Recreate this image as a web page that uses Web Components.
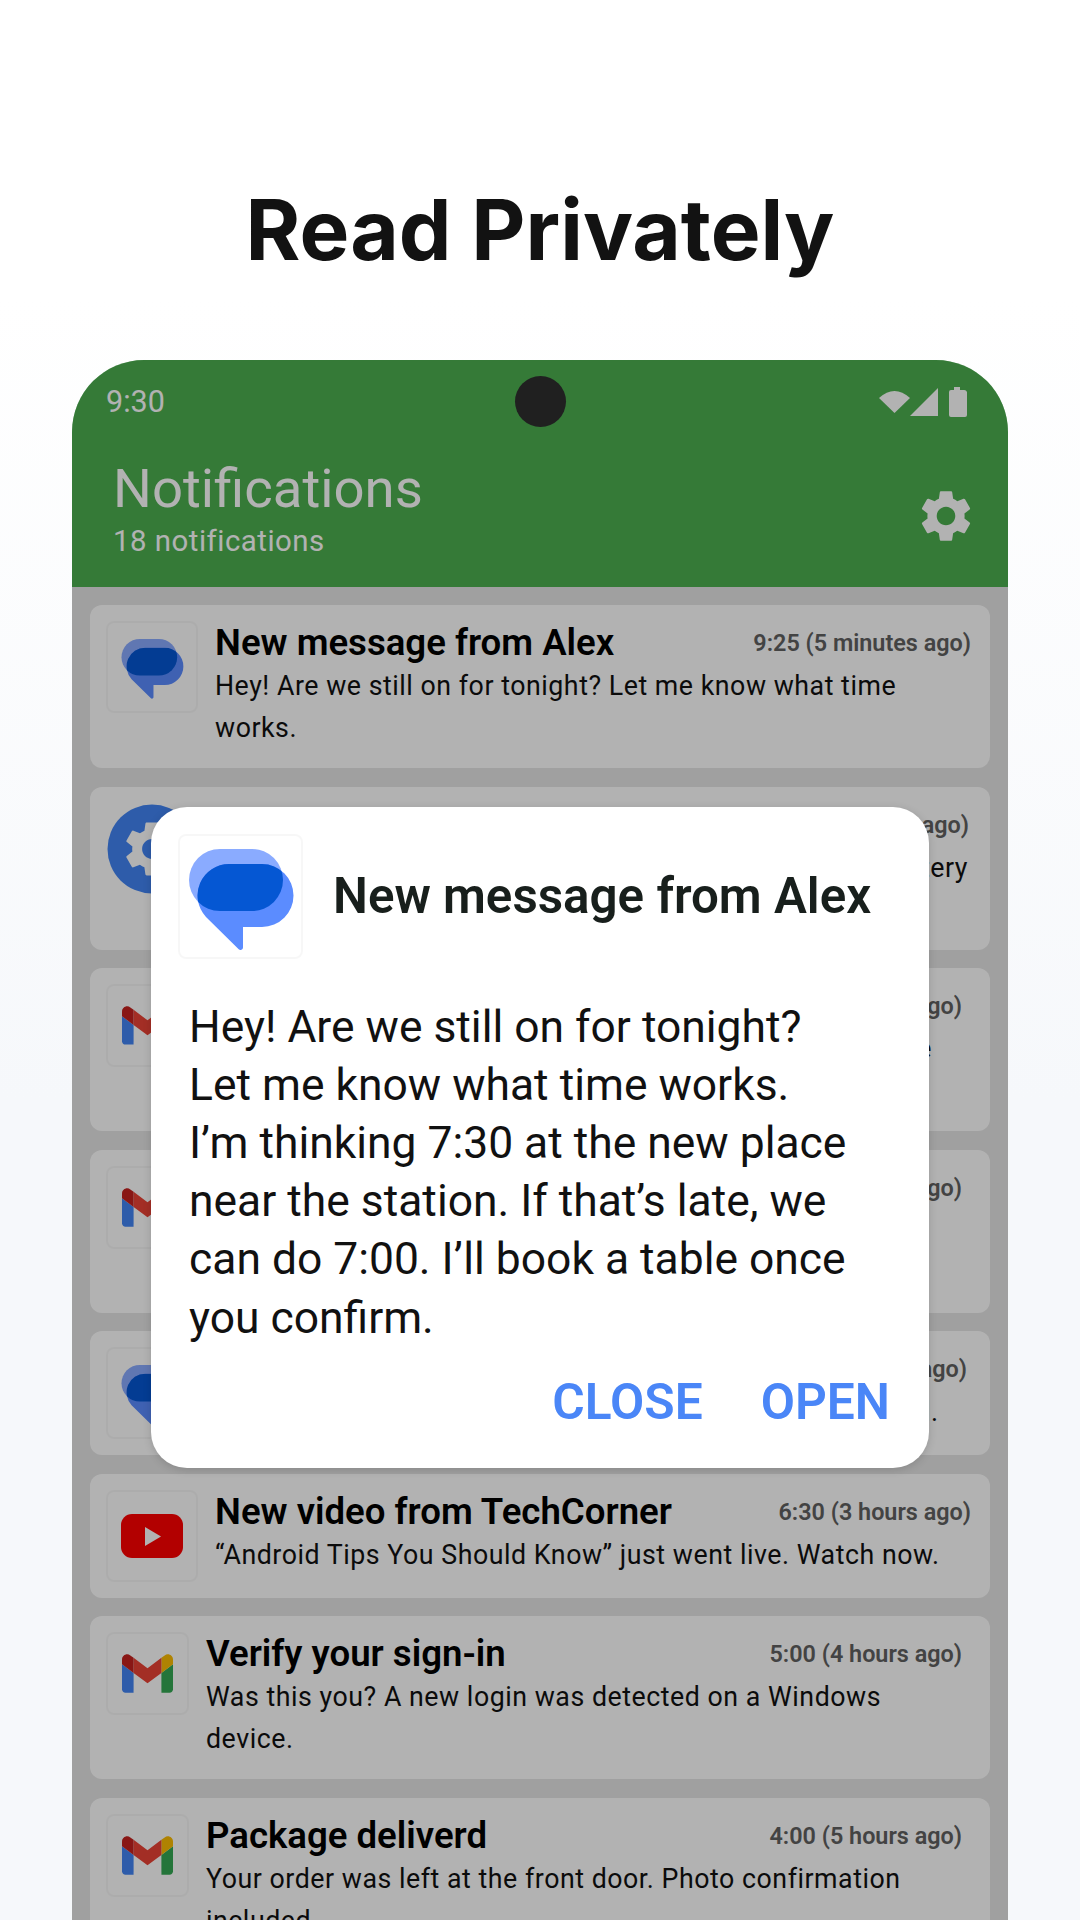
<!DOCTYPE html>
<html lang="en">
<head>
<meta charset="utf-8">
<title>Read Privately</title>
<style>
  html, body { margin: 0; padding: 0; }
  body { font-family: Roboto, "Liberation Sans", sans-serif; }
</style>
</head>
<body>
<store-screen>
  <span slot="headline">Read Privately</span>

  <notif-card icon="messages" box="92" heading="New message from Alex" time="9:25 (5 minutes ago)">Hey! Are we still on for tonight? Let me know what time works.</notif-card>
  <notif-card icon="settings" box="90" heading="Battery running low" time="8:45 (45 minutes ago)">Your phone is at 15%. Turn on Battery Saver to extend battery use for the rest of today.</notif-card>
  <notif-card icon="gmail" box="83" heading="Your receipt is ready" time="8:10 (1 hour ago)">Thanks for your purchases! Your receipt is attached for the latest order from the store today.</notif-card>
  <notif-card icon="gmail" box="83" heading="Meeting moved to Friday" time="7:40 (2 hours ago)">The team sync now starts at 10:00 and the room has changed. Please update your calendar.</notif-card>
  <notif-card icon="messages" box="92" gap="13" heading="New message from Mom" time="7:05 (2 hours ago)">Call me when you get the chance, it is nothing urgent at all.</notif-card>
  <notif-card icon="youtube" box="92" heading="New video from TechCorner" time="6:30 (3 hours ago)">“Android Tips You Should Know” just went live. Watch now.</notif-card>
  <notif-card icon="gmail" box="83" heading="Verify your sign-in" time="5:00 (4 hours ago)">Was this you? A new login was detected on a Windows device.</notif-card>
  <notif-card icon="gmail" box="83" heading="Package deliverd" time="4:00 (5 hours ago)">Your order was left at the front door. Photo confirmation included.</notif-card>

  <alert-dialog slot="dialog" heading="New message from Alex">
    Hey! Are we still on for tonight?<br>
    Let me know what time works.<br>
    I’m thinking 7:30 at the new place near the station. If that’s late, we can do 7:00. I’ll book a table once you confirm.
  </alert-dialog>
</store-screen>

<script>
const GEAR = "M19.14 12.94c.04-.3.06-.61.06-.94 0-.32-.02-.64-.07-.94l2.03-1.58c.18-.14.23-.41.12-.61l-1.92-3.32c-.12-.22-.37-.29-.59-.22l-2.39.96c-.5-.38-1.03-.7-1.62-.94l-.36-2.54c-.04-.24-.24-.41-.48-.41h-3.84c-.24 0-.43.17-.47.41l-.36 2.54c-.59.24-1.13.57-1.62.94l-2.39-.96c-.22-.08-.47 0-.59.22L2.74 8.87c-.12.21-.08.47.12.61l2.03 1.58c-.05.3-.09.63-.09.94s.02.64.07.94l-2.03 1.58c-.18.14-.23.41-.12.61l1.92 3.32c.12.22.37.29.59.22l2.39-.96c.5.38 1.03.7 1.62.94l.36 2.54c.05.24.24.41.48.41h3.84c.24 0 .44-.17.47-.41l.36-2.54c.59-.24 1.13-.56 1.62-.94l2.39.96c.22.08.47 0 .59-.22l1.92-3.32c.12-.22.07-.47-.12-.61l-2.01-1.58zM12 15.6c-1.98 0-3.6-1.62-3.6-3.6s1.62-3.6 3.6-3.6 3.6 1.62 3.6 3.6-1.62 3.6-3.6 3.6z";

const BUBBLE = "M51 30H84A31.5 31.5 0 0 1 84 93H65V113.5a2.5 2.5 0 0 1-4.3 1.7L28 83A31.5 31.5 0 0 1 51 30z";

let clipCount = 0;
const ICONS = {
  messages(size) {
    const id = "bubble" + clipCount++;
    return `<svg width="${size}" height="${size}" viewBox="0 0 125 125">
      <clipPath id="${id}"><path d="${BUBBLE}"/></clipPath>
      <rect x="11" y="15" width="94" height="62" rx="31" fill="#8aabff"/>
      <path d="${BUBBLE}" fill="#5b8cff"/>
      <rect x="11" y="15" width="94" height="62" rx="31" fill="#0557d3" clip-path="url(#${id})"/>
    </svg>`;
  },
  gmail() {
    return `<svg width="51" height="39" viewBox="52 42 88 66">
      <path fill="#4285f4" d="M58 108h14V74L52 59v43c0 3.32 2.69 6 6 6"/>
      <path fill="#34a853" d="M120 108h14c3.32 0 6-2.69 6-6V59l-20 15"/>
      <path fill="#fbbc04" d="M120 48v26l20-15v-8c0-7.42-8.47-11.65-14.4-7.2"/>
      <path fill="#ea4335" d="M72 74V48l24 18 24-18v26L96 92"/>
      <path fill="#c5221f" d="M52 51v8l20 15V48l-5.6-4.2c-5.94-4.45-14.4-.22-14.4 7.2"/>
    </svg>`;
  },
  youtube() {
    return `<svg width="62" height="44" viewBox="0 0 62 44">
      <rect width="62" height="44" rx="11" fill="#f00"/>
      <path d="M24 13V32L40 22.500z" fill="#fff"/>
    </svg>`;
  },
  settings() {
    return `<svg width="90" height="90" viewBox="0 0 90 90">
      <circle cx="46" cy="45" r="44.500" fill="#4285f4"/>
      <g transform="translate(13 12) scale(2.750)"><path d="${GEAR}" fill="#fff"/></g>
    </svg>`;
  },
};

class AppIcon extends HTMLElement {
  constructor() {
    super();
    this.attachShadow({ mode: "open" });
  }
  connectedCallback() {
    const box = this.getAttribute("box") ?? "92";
    const svg = this.getAttribute("svg") ?? "74";
    const name = this.getAttribute("name");
    this.shadowRoot.innerHTML = `
      <style>
        :host { display: flex; flex: none; align-items: center; justify-content: center;
          box-sizing: border-box; width: ${box}px; height: ${box}px;
          border: 2px solid rgba(0,0,0,.03); border-radius: 8px; }
        :host([name="settings"]) { border: 0; height: 92px; }
        svg { display: block; flex: none; }
      </style>
      ${ICONS[name](+svg)}`;
  }
}

class NotifCard extends HTMLElement {
  constructor() {
    super();
    this.attachShadow({ mode: "open" });
  }
  connectedCallback() {
    const gap = this.getAttribute("gap") ?? "17";
    this.shadowRoot.innerHTML = `
      <style>
        :host { display: flex; gap: ${gap}px; box-sizing: border-box; padding: 16px 0 16px 16px;
          background: #fff; border-radius: 12px; flex: none; }
        .text { width: 756px; flex: none; padding-bottom: 3px; }
        .top { display: flex; justify-content: space-between; align-items: center; height: 44px; }
        h3 { margin: 0; font: 600 36.600px/44px Roboto, sans-serif; color: #000; }
        time { font: 600 23.400px/44px Roboto, sans-serif; color: #616161; }
        p { margin: 0; font: 400 26.750px/42px Roboto, sans-serif; letter-spacing: .53px; color: #111; }
      </style>
      <app-icon name="${this.getAttribute("icon")}" box="${this.getAttribute("box")}" svg="${this.getAttribute("svg") ?? "74"}"></app-icon>
      <div class="text">
        <div class="top"><h3>${this.getAttribute("heading")}</h3><time>${this.getAttribute("time")}</time></div>
        <p><slot></slot></p>
      </div>`;
  }
}

class AlertDialog extends HTMLElement {
  constructor() {
    super();
    this.attachShadow({ mode: "open" });
  }
  connectedCallback() {
    this.shadowRoot.innerHTML = `
      <style>
        :host { display: block; box-sizing: border-box; width: 778px; height: 661px; padding: 27px 39px 0 27px;
          background: #fff; border-radius: 36px; box-shadow: 0 2px 8px rgba(0,0,0,.15); }
        header { display: flex; align-items: center; gap: 30px; }
        h2 { margin: -2px 0 0; font: 600 49.300px/56px Roboto, sans-serif; color: #181f1c; white-space: nowrap; }
        p { margin: 38.500px 0 0 11px; width: 700px; font: 400 44.400px/58.200px Roboto, sans-serif; color: #111; }
        .actions { display: flex; justify-content: flex-end; gap: 58px; margin-top: 26px; }
        button { all: unset; font: 600 49.700px/58px Roboto, sans-serif; color: #4a86f7; }
      </style>
      <header>
        <app-icon name="messages" box="125" svg="125"></app-icon>
        <h2>${this.getAttribute("heading")}</h2>
      </header>
      <p><slot></slot></p>
      <div class="actions"><button>CLOSE</button><button>OPEN</button></div>`;
  }
}

class StatusBar extends HTMLElement {
  constructor() {
    super();
    this.attachShadow({ mode: "open" });
  }
  connectedCallback() {
    this.shadowRoot.innerHTML = `
      <style>
        :host { display: grid; grid-template-columns: 1fr auto 1fr; align-items: center; height: 84px;
          padding: 0 41px; color: #fff; font: 400 30.500px Roboto, sans-serif; }
        span { margin: -2px 0 0 -7px; }
        .camera { width: 51px; height: 51px; border-radius: 50%; background: #2e2e2e; margin-bottom: 1px; }
        .icons { justify-self: end; display: block; }
      </style>
      <span>9:30</span>
      <div class="camera"></div>
      <svg class="icons" width="88" height="30" viewBox="0 0 88 30" fill="#fff">
        <path d="M0 11Q15.500-3 31 11L15.500 26z"/>
        <path d="M31 29L59 1V29z"/>
        <path d="M70 5a2 2 0 0 1 2-2H75V0h6V3h4a3 3 0 0 1 3 2V28a2 2 0 0 1-2 2H72a2 2 0 0 1-2-2z"/>
      </svg>`;
  }
}

class AppBar extends HTMLElement {
  constructor() {
    super();
    this.attachShadow({ mode: "open" });
  }
  connectedCallback() {
    this.shadowRoot.innerHTML = `
      <style>
        :host { display: flex; justify-content: space-between; align-items: center; height: 143px;
          padding: 0 31px 0 41px; color: #fff; }
        .titles { align-self: flex-start; padding-top: 14px; }
        h1 { margin: 0; font: 400 54.500px/60px Roboto, sans-serif; }
        p { margin: 5px 0 0; font: 400 29.400px/36px Roboto, sans-serif; letter-spacing: .5px; }
        svg { display: block; }
      </style>
      <div class="titles"><h1>${this.getAttribute("heading")}</h1><p>${this.getAttribute("count")}</p></div>
      <svg width="62" height="62" viewBox="0 0 24 24" fill="#fff"><path d="${GEAR}"/></svg>`;
  }
}

class StoreScreen extends HTMLElement {
  constructor() {
    super();
    this.attachShadow({ mode: "open" });
  }
  connectedCallback() {
    this.shadowRoot.innerHTML = `
      <style>
        :host { display: block; width: 1080px; height: 1920px; overflow: hidden;
          background: linear-gradient(#fff 0, #fff 300px, #f6f8fb 1100px); }
        .headline { height: 360px; box-sizing: border-box; padding-top: 170px; text-align: center;
          font: 700 83.700px/120px Inter, sans-serif; color: #121212; }
        .phone { position: relative; width: 936px; height: 1560px; margin: 0 auto; overflow: hidden;
          border-radius: 72px 72px 0 0; background: #e5e5e5; }
        .head { background: #4caf50; }
        .list { display: flex; flex-direction: column; gap: 18.500px; padding: 18px; }
        .scrim { position: absolute; inset: 0; background: rgba(0,0,0,.3); }
        .dialog { position: absolute; left: 79px; top: 447px; }
      </style>
      <div class="headline"><slot name="headline"></slot></div>
      <div class="phone">
        <div class="head">
          <status-bar></status-bar>
          <app-bar heading="Notifications" count="18 notifications"></app-bar>
        </div>
        <div class="list"><slot></slot></div>
        <div class="scrim"></div>
        <div class="dialog"><slot name="dialog"></slot></div>
      </div>`;
  }
}

customElements.define("app-icon", AppIcon);
customElements.define("notif-card", NotifCard);
customElements.define("alert-dialog", AlertDialog);
customElements.define("status-bar", StatusBar);
customElements.define("app-bar", AppBar);
customElements.define("store-screen", StoreScreen);
</script>
</body>
</html>
